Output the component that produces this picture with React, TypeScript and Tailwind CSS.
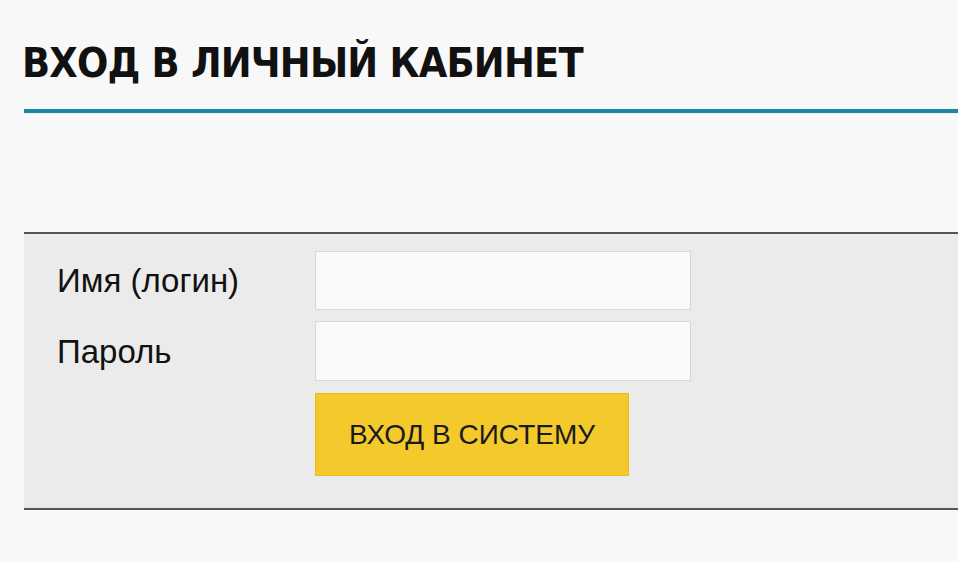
export default function App() {
  return (
    <div className="w-[958px] h-[562px] overflow-hidden bg-[#f8f8f8] font-['Liberation_Sans',Arial,sans-serif]">
      {/* Page heading */}
      <div className="pt-[39px] pl-[22px]">
        <h1 className="font-['DejaVu_Sans_Condensed','DejaVu_Sans',Verdana,sans-serif] font-bold text-[41px] leading-[48px] [font-stretch:condensed] tracking-[-0.8px] text-[#111]">
          ВХОД В ЛИЧНЫЙ КАБИНЕТ
        </h1>
      </div>
      <div className="ml-[24px] mt-[22px] h-[4px] bg-[#1d87a2] shadow-[0_0_1px_#6cc9dc]" />

      {/* Login panel */}
      <div className="ml-[24px] mt-[119px] border-t-2 border-b-2 border-[#555] bg-[#ebebeb] pl-[33px] pt-[17px] pb-[32px]">
        <form className="grid grid-cols-[258px_376px] gap-y-[11px] items-center" onSubmit={(e) => e.preventDefault()}>
          <label htmlFor="login" className="text-[33px] leading-none text-[#111]">
            Имя (логин)
          </label>
          <input
            id="login"
            type="text"
            className="h-[59px] bg-[#f9f9f9] border border-[#d7d7d7] outline-none"
          />
          <label htmlFor="password" className="text-[33px] leading-none text-[#111]">
            Пароль
          </label>
          <input
            id="password"
            type="password"
            className="h-[60px] bg-[#f9f9f9] border border-[#d7d7d7] outline-none"
          />
          <div />
          <div className="pt-px">
            <button
              type="submit"
              className="w-[314px] h-[83px] bg-[#f3c92c] border border-[#e6bb1f] text-[28px] text-[#1a1a1a] flex items-center justify-center"
            >
              ВХОД В СИСТЕМУ
            </button>
          </div>
        </form>
      </div>
    </div>
  );
}
